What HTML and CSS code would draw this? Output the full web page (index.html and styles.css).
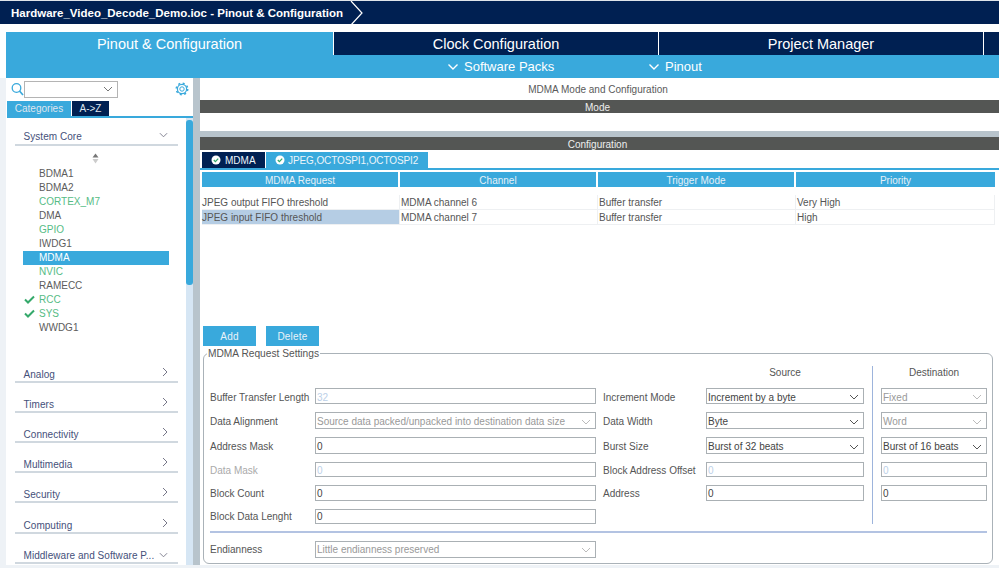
FILE: index.html
```html
<!DOCTYPE html>
<html lang="en">
<head>
<meta charset="utf-8">
<title>Hardware_Video_Decode_Demo.ioc - Pinout &amp; Configuration</title>
<link rel="stylesheet" href="styles.css">
</head>
<body>
<header class="crumb">
  <span class="crumb-text">Hardware_Video_Decode_Demo.ioc - Pinout &amp; Configuration</span>
  <svg class="crumb-arrow" width="14" height="24" viewBox="0 0 14 24"><path d="M1 0 L12 12 L1 24" fill="none" stroke="#fff" stroke-width="1.2"/></svg>
</header>
<nav class="tabs">
  <div class="tab tab-active">Pinout &amp; Configuration</div>
  <div class="tab">Clock Configuration</div>
  <div class="tab">Project Manager</div>
  <div class="tab tab-rest"></div>
</nav>
<div class="subbar">
  <div class="sub-item sub-packs"><svg width="12" height="8" viewBox="0 0 12 8"><path d="M1.5 1.5 L6 6 L10.5 1.5" fill="none" stroke="#fff" stroke-width="1.4"/></svg>Software Packs</div>
  <div class="sub-item"><svg width="12" height="8" viewBox="0 0 12 8"><path d="M1.5 1.5 L6 6 L10.5 1.5" fill="none" stroke="#fff" stroke-width="1.4"/></svg>Pinout</div>
</div>
<div class="workspace">
  <aside class="side">
    <div class="search">
      <svg class="ic-search" width="13" height="14" viewBox="0 0 13 14"><circle cx="5.5" cy="6" r="4.3" fill="none" stroke="#39a9dc" stroke-width="1.3"/><path d="M8.5 9 L12 13" stroke="#39a9dc" stroke-width="1.6"/></svg>
      <div class="search-box"><svg width="10" height="6" viewBox="0 0 10 6"><path d="M1 1 L5 5 L9 1" fill="none" stroke="#777" stroke-width="1"/></svg></div>
      <svg class="ic-gear" width="14" height="14" viewBox="0 0 14 14"><circle cx="7" cy="7" r="2.2" fill="none" stroke="#39a9dc" stroke-width="1"/><circle cx="7" cy="7" r="4.6" fill="none" stroke="#39a9dc" stroke-width="1.2"/><circle cx="7" cy="7" r="5.7" fill="none" stroke="#39a9dc" stroke-width="1.6" stroke-dasharray="2 2.48"/></svg>
    </div>
    <div class="side-tabs"><span class="st st-on">Categories</span><span class="st">A-&gt;Z</span></div>
    <div class="side-panel">
      <div class="tree">
        <div class="cat cat-open"><span>System Core</span><svg width="9" height="6" viewBox="0 0 10 6"><path d="M1 1 L5 5 L9 1" fill="none" stroke="#778" stroke-width="1"/></svg></div>
        <div class="sort"><svg width="7" height="11" viewBox="0 0 7 11"><path d="M3.5 0.5 L6.5 4.5 H0.5 Z" fill="#777"/><path d="M3.5 10.5 L6.5 6 H0.5 Z" fill="#ccc"/></svg></div>
        <ul class="items">
          <li class="item">BDMA1</li>
          <li class="item">BDMA2</li>
          <li class="item ok">CORTEX_M7</li>
          <li class="item">DMA</li>
          <li class="item ok">GPIO</li>
          <li class="item">IWDG1</li>
          <li class="item sel">MDMA</li>
          <li class="item ok">NVIC</li>
          <li class="item">RAMECC</li>
          <li class="item ok"><svg class="tick" width="11" height="9" viewBox="0 0 11 9"><path d="M1 4.5 L4 7.5 L10 1.5" fill="none" stroke="#35a96b" stroke-width="2"/></svg>RCC</li>
          <li class="item ok"><svg class="tick" width="11" height="9" viewBox="0 0 11 9"><path d="M1 4.5 L4 7.5 L10 1.5" fill="none" stroke="#35a96b" stroke-width="2"/></svg>SYS</li>
          <li class="item">WWDG1</li>
        </ul>
        <div class="cat cat-first"><span>Analog</span><svg width="6" height="10" viewBox="0 0 6 10"><path d="M1 1 L5 5 L1 9" fill="none" stroke="#778" stroke-width="1"/></svg></div>
        <div class="cat"><span>Timers</span><svg width="6" height="10" viewBox="0 0 6 10"><path d="M1 1 L5 5 L1 9" fill="none" stroke="#778" stroke-width="1"/></svg></div>
        <div class="cat"><span>Connectivity</span><svg width="6" height="10" viewBox="0 0 6 10"><path d="M1 1 L5 5 L1 9" fill="none" stroke="#778" stroke-width="1"/></svg></div>
        <div class="cat"><span>Multimedia</span><svg width="6" height="10" viewBox="0 0 6 10"><path d="M1 1 L5 5 L1 9" fill="none" stroke="#778" stroke-width="1"/></svg></div>
        <div class="cat"><span>Security</span><svg width="6" height="10" viewBox="0 0 6 10"><path d="M1 1 L5 5 L1 9" fill="none" stroke="#778" stroke-width="1"/></svg></div>
        <div class="cat"><span>Computing</span><svg width="6" height="10" viewBox="0 0 6 10"><path d="M1 1 L5 5 L1 9" fill="none" stroke="#778" stroke-width="1"/></svg></div>
        <div class="cat"><span>Middleware and Software P...</span><svg width="9" height="6" viewBox="0 0 10 6"><path d="M1 1 L5 5 L9 1" fill="none" stroke="#778" stroke-width="1"/></svg></div>
      </div>
      <div class="track"><div class="thumb"></div></div>
    </div>
  </aside>
  <div class="gutter"></div>
  <main class="main">
    <div class="mode-title">MDMA Mode and Configuration</div>
    <div class="bar">Mode</div>
    <div class="mode-body"></div>
    <div class="split"></div>
    <div class="bar">Configuration</div>
    <div class="cfg-tabs">
      <div class="cfg-tab cfg-on"><svg width="10" height="10" viewBox="0 0 10 10"><circle cx="5" cy="5" r="4.5" fill="#fff"/><path d="M2.8 5 L4.4 6.6 L7.2 3.6" fill="none" stroke="#35a96b" stroke-width="1.3"/></svg>MDMA</div>
      <div class="cfg-tab cfg-jpeg"><svg width="10" height="10" viewBox="0 0 10 10"><circle cx="5" cy="5" r="4.5" fill="#fff"/><path d="M2.8 5 L4.4 6.6 L7.2 3.6" fill="none" stroke="#35a96b" stroke-width="1.3"/></svg>JPEG,OCTOSPI1,OCTOSPI2</div>
    </div>
    <div class="grid-table">
      <div class="th">MDMA Request</div><div class="th">Channel</div><div class="th">Trigger Mode</div><div class="th">Priority</div>
      <div class="td">JPEG output FIFO threshold</div><div class="td">MDMA channel 6</div><div class="td">Buffer transfer</div><div class="td">Very High</div>
      <div class="td td-sel">JPEG input FIFO threshold</div><div class="td">MDMA channel 7</div><div class="td">Buffer transfer</div><div class="td">High</div>
    </div>
    <div class="actions"><button class="btn">Add</button><button class="btn">Delete</button></div>
    <fieldset class="settings">
      <legend>MDMA Request Settings</legend>
      <div class="form">
        <div class="corner"></div>
        <div class="head h-src">Source</div>
        <div class="vline"></div>
        <div class="head h-dst">Destination</div>

        <label class="lb low">Buffer Transfer Length</label><div class="fld off low">32</div>
        <label class="lb lb2 low">Increment Mode</label><div class="fld sel-f low">Increment by a byte<svg width="10" height="6" viewBox="0 0 10 6"><path d="M1 1 L5 5 L9 1" fill="none" stroke="#555" stroke-width="1"/></svg></div>
        <div class="fld sel-f dst dis low">Fixed<svg width="10" height="6" viewBox="0 0 10 6"><path d="M1 1 L5 5 L9 1" fill="none" stroke="#bbb" stroke-width="1"/></svg></div>

        <label class="lb low">Data Alignment</label><div class="fld sel-f dis low">Source data packed/unpacked into destination data size<svg width="10" height="6" viewBox="0 0 10 6"><path d="M1 1 L5 5 L9 1" fill="none" stroke="#bbb" stroke-width="1"/></svg></div>
        <label class="lb lb2 low">Data Width</label><div class="fld sel-f low">Byte<svg width="10" height="6" viewBox="0 0 10 6"><path d="M1 1 L5 5 L9 1" fill="none" stroke="#555" stroke-width="1"/></svg></div>
        <div class="fld sel-f dst dis low">Word<svg width="10" height="6" viewBox="0 0 10 6"><path d="M1 1 L5 5 L9 1" fill="none" stroke="#bbb" stroke-width="1"/></svg></div>

        <label class="lb low">Address Mask</label><div class="fld low">0</div>
        <label class="lb lb2 low">Burst Size</label><div class="fld sel-f low">Burst of 32 beats<svg width="10" height="6" viewBox="0 0 10 6"><path d="M1 1 L5 5 L9 1" fill="none" stroke="#555" stroke-width="1"/></svg></div>
        <div class="fld sel-f dst low">Burst of 16 beats<svg width="10" height="6" viewBox="0 0 10 6"><path d="M1 1 L5 5 L9 1" fill="none" stroke="#555" stroke-width="1"/></svg></div>

        <label class="lb lb-off low">Data Mask</label><div class="fld off low">0</div>
        <label class="lb lb2 low">Block Address Offset</label><div class="fld off low">0</div>
        <div class="fld off dst low">0</div>

        <label class="lb">Block Count</label><div class="fld">0</div>
        <label class="lb lb2">Address</label><div class="fld">0</div>
        <div class="fld dst">0</div>

        <label class="lb">Block Data Lenght</label><div class="fld">0</div>
      </div>
      <hr class="rule">
      <div class="form form-end">
        <label class="lb">Endianness</label><div class="fld sel-f dis">Little endianness preserved<svg width="10" height="6" viewBox="0 0 10 6"><path d="M1 1 L5 5 L9 1" fill="none" stroke="#bbb" stroke-width="1"/></svg></div>
      </div>
    </fieldset>
  </main>
</div>
</body>
</html>
```

FILE: styles.css
```css
* { box-sizing: border-box; }
html, body { margin: 0; padding: 0; }
body {
  width: 999px; height: 568px; overflow: hidden;
  background: #fff;
  font-family: "Liberation Sans", Arial, sans-serif;
  color: #555;
}
svg { display: block; flex: none; }

.crumb {
  height: 24px; background: #002052; color: #fff;
  display: flex; align-items: center; padding-left: 11px;
  border-top: 1px solid #dfe4ea;
}
.crumb-text { font-size: 11.5px; font-weight: bold; }
.crumb-arrow { margin-left: 7px; }

.tabs { display: flex; margin: 8px 0 0 6px; height: 23px; }
.tab {
  width: 324px; margin-right: 1px; background: #002052; color: #fff;
  font-size: 14.5px; text-align: center; line-height: 24px;
}
.tab-active { width: 327px; background: #39a9dc; }
.tab-rest { flex: 1; margin-right: 0; }

.subbar {
  margin-left: 6px; height: 23px; background: #39a9dc; color: #fff;
  display: flex; font-size: 13px; line-height: 24px;
}
.sub-item { display: flex; align-items: center; gap: 5px; }
.sub-packs { margin-left: 441px; width: 201px; }

.workspace { display: flex; height: 490px; background: #eef2f6; }
.side { width: 187px; margin-left: 6px; flex: none; display: flex; flex-direction: column; height: 487px; background: #fff; }
.gutter { width: 7px; flex: none; height: 487px; background: #b8c4cc; }
.search { height: 21px; display: flex; align-items: center; padding-top: 1px; flex: none; }
.ic-search { margin-left: 5px; }
.search-box {
  width: 94px; height: 17px;
  border: 1px solid #b4b4b4; display: flex; align-items: center; justify-content: flex-end; padding-right: 4px;
}
.ic-gear { margin-left: 57px; }

.side-tabs { display: flex; flex: none; height: 17px; margin: 2px 0 0 1px; font-size: 10px; line-height: 15px; border-bottom: 2px solid #39a9dc; }
.st { background: #002052; color: #dfe6ef; width: 37px; text-align: center; }
.st-on { background: #39a9dc; width: 64px; margin-right: 1px; }

.side-panel { flex: 1; display: flex; min-height: 0; }
.tree { width: 180px; padding-left: 9px; }
.track { width: 7px; background: #d6e6f4; height: 100%; }
.thumb { height: 165px; background: #39a9dc; border-radius: 3px; margin-top: 2px; }

.cat {
  height: 30.1px; width: 163px; display: flex; justify-content: space-between; align-items: flex-end;
  border-bottom: 2px solid #d0d8df; color: #45507a; font-size: 10px; padding: 0 10px 1px 8.5px; letter-spacing: 0.05px; white-space: nowrap;
}
.cat svg { margin-bottom: 3px; }
.cat-open { height: 28px; padding-bottom: 2px; }
.cat-open svg { margin-bottom: 4px; }
.cat-first { margin-top: 18px; }
.sort { height: 21px; padding-left: 77px; padding-top: 7px; }
.items { list-style: none; margin: 0; padding: 0; }
.item {
  position: relative; height: 14px; width: 146px; margin-left: 8px; padding-left: 16px;
  font-size: 10px; line-height: 14px; color: #5c5c5c;
}
.ok { color: #56bc85; }
.sel { background: #39a9dc; color: #fff; }
.tick { position: absolute; left: 1px; top: 2px; }

.main { flex: 1; background: #fff; height: 487px; display: flex; flex-direction: column; }
.main > * { flex: none; }
.mode-title { height: 22px; text-align: center; font-size: 10px; line-height: 23px; color: #5a5a5a; padding-right: 3px; }
.bar { height: 13px; background: #545654; color: #eee; text-align: center; font-size: 10px; line-height: 15px; padding-right: 4px; }
.mode-body { height: 18px; }
.split { height: 6px; background: #b8c4cc; }

.cfg-tabs { display: flex; height: 20px; padding: 2px 0 0 2px; border-bottom: 2px solid #39a9dc; font-size: 10px; }
.cfg-tab { display: flex; align-items: center; gap: 4px; padding-left: 9px; background: #39a9dc; color: #eef5fa; width: 162px; }
.cfg-on { background: #002052; width: 63px; margin-right: 1px; }
.cfg-jpeg { letter-spacing: -0.1px; gap: 3px; }

.grid-table { display: grid; grid-template-columns: 198px 198px 198px 199px; margin: 2px 0 0 2px; grid-template-rows: 15px 23px 15px; font-size: 10px; width: 793px; }
.th { background: #39a9dc; color: #e6f0f7; text-align: center; line-height: 17px; border-right: 2px solid #fff; }
.th:nth-child(4) { border-right: 0; }
.td { height: 15px; line-height: 15px; color: #555; border-bottom: 1px solid #eef0f2; border-right: 1px solid #eef0f2; }
.td:nth-child(n+5):nth-child(-n+8) { margin-top: 8px; }
.td:not(:nth-child(4n+1)) { padding-left: 1px; }
.td-sel { background: #b5cde4; }

.actions { display: flex; gap: 10px; margin: 101px 0 0 3px; }
.btn { width: 53px; height: 20px; border: 0; padding: 0; background: #39a9dc; color: #eaf3f9; font: 10px "Liberation Sans", Arial, sans-serif; letter-spacing: 0.2px; }

.settings {
  margin: 1px 6px 0 3px; padding: 0 5px 0 6px; min-width: 0; height: 217px;
  border: 1px solid #aab2b8; border-radius: 6px; background: #fff;
}
.settings legend { margin-left: -3px; padding: 0 1px; font-size: 10.2px; color: #555; line-height: 13px; }

.form {
  display: grid; row-gap: 8px; margin-top: 6px;
  grid-template-columns: 105px 281px 7px 103px 158px 17px 106px;
  grid-template-rows: 14px 16px 17px 17px 15px 16px 15px;
  font-size: 10px;
}
.corner { grid-column: 1; }
.head { text-align: center; line-height: 14px; color: #555; }
.h-src { grid-column: 5; grid-row: 1; }
.h-dst { grid-column: 7; grid-row: 1; }
.vline { grid-column: 6; grid-row: 1 / 8; width: 1px; margin-left: 8px; background: #9db4dc; }
.lb { grid-column: 1; display: flex; align-items: center; color: #555; white-space: nowrap; }
.lb2 { grid-column: 4; }
.lb-off { color: #aaa; }
.low { padding-top: 2px; }
.fld {
  grid-column: 2; border: 1px solid #aab0b4; color: #444; padding-left: 1px;
  display: flex; align-items: center; justify-content: space-between; padding-right: 4px; white-space: nowrap;
}
.lb2 + .fld { grid-column: 5; }
.dst { grid-column: 7; }
.off { color: #bcd0e8; }
.dis { color: #999; }
.rule { height: 2px; border: 0; margin: 7px 0 8px; background: #b3c3e2; }
.form-end { margin-top: 0; grid-template-rows: 17px; }
```
